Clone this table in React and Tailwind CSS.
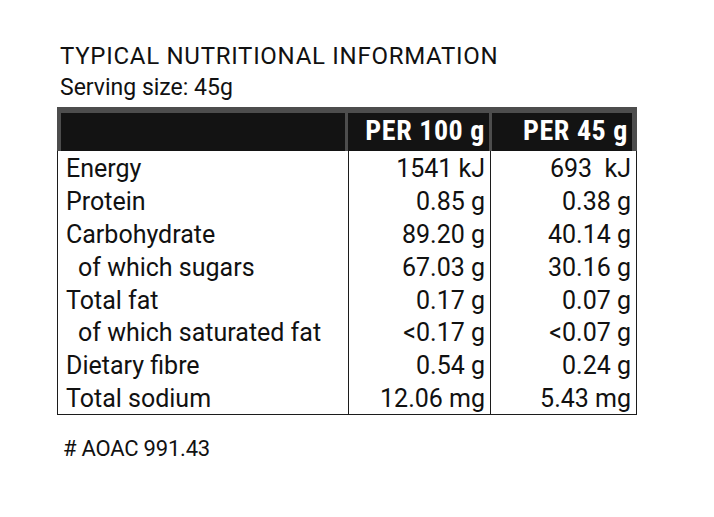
const rows = [
  { label: "Energy", a: "1541 kJ", b: "693  kJ" },
  { label: "Protein", a: "0.85 g", b: "0.38 g" },
  { label: "Carbohydrate", a: "89.20 g", b: "40.14 g" },
  { label: "of which sugars", a: "67.03 g", b: "30.16 g", sub: true },
  { label: "Total fat", a: "0.17 g", b: "0.07 g" },
  { label: "of which saturated fat", a: "<0.17 g", b: "<0.07 g", sub: true },
  { label: "Dietary fibre", a: "0.54 g", b: "0.24 g" },
  { label: "Total sodium", a: "12.06 mg", b: "5.43 mg" },
];

export default function App() {
  return (
    <div className="w-[714px] h-[517px] bg-white font-['Roboto',sans-serif] text-[#111]">
      {/* Heading */}
      <div className="pl-[60px] pt-[42px]">
        <h1 className="text-[24px] leading-[28px] tracking-[0.03em]">TYPICAL NUTRITIONAL INFORMATION</h1>
        <p className="mt-[2px] text-[23px] leading-[32px]">Serving size: 45g</p>
      </div>

      {/* Table */}
      <div className="ml-[57px] mt-[3px] w-[580px]">
        <div className="flex h-[44px] bg-[#4d4d4d] pt-[6px] pl-[4px] pr-[5px] gap-[3px]">
          <div className="w-[284px] bg-[#131313]" />
          <div className="w-[141px] bg-[#131313] pt-[4px] pr-[4px] text-right text-[28px] leading-[28px] font-bold font-stretch-condensed tracking-[0.02em] text-white">
            PER 100 g
          </div>
          <div className="flex-1 bg-[#131313] pt-[4px] pr-[4px] text-right text-[28px] leading-[28px] font-bold font-stretch-condensed tracking-[0.02em] text-white">
            PER 45 g
          </div>
        </div>

        <div className="flex border-[1.5px] border-t-0 border-[#1c1c1c] text-[25px]">
          <div className="w-[290px]">
            {rows.map((r) => (
              <div key={r.label} className={`h-[32.875px] pt-[3px] leading-[30px] whitespace-nowrap ${r.sub ? "pl-[20px]" : "pl-[8px]"}`}>
                {r.label}
              </div>
            ))}
          </div>
          <div className="w-[142px] border-l-[1.5px] border-[#1c1c1c]">
            {rows.map((r) => (
              <div key={r.label} className="h-[32.875px] pt-[3px] pr-[5px] leading-[30px] text-right whitespace-pre">
                {r.a}
              </div>
            ))}
          </div>
          <div className="flex-1 border-l-[1.5px] border-[#1c1c1c]">
            {rows.map((r) => (
              <div key={r.label} className="h-[32.875px] pt-[3px] pr-[5px] leading-[30px] text-right whitespace-pre">
                {r.b}
              </div>
            ))}
          </div>
        </div>
      </div>

      {/* Footnote */}
      <p className="mt-[20px] pl-[63px] text-[22px] leading-[28px] tracking-[-0.01em]"># AOAC 991.43</p>
    </div>
  );
}
